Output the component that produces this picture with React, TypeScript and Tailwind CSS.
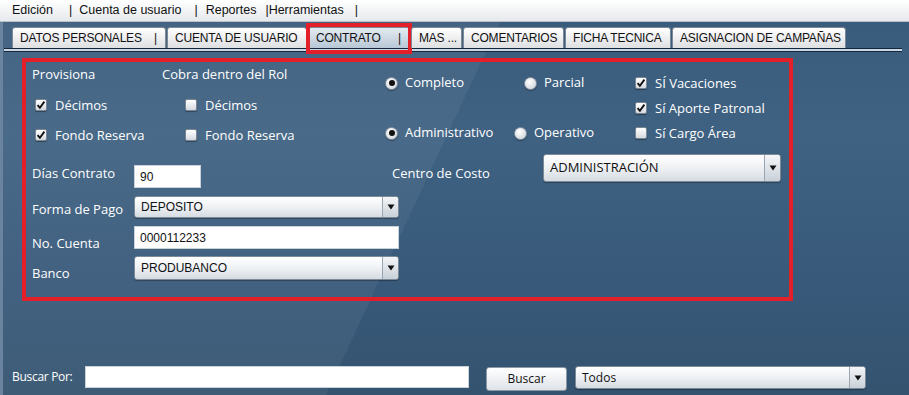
import React from "react";

const comic = { fontFamily: '"Open Sans", "DejaVu Sans", sans-serif' };
const arial = { fontFamily: '"Liberation Sans", Arial, sans-serif' };

function Check({ checked }: { checked?: boolean }) {
  return (
    <span className="w-[12px] h-[12px] shrink-0 border border-[#7b8794] rounded-[2px] bg-[linear-gradient(180deg,#ffffff,#d5dae0)] flex items-center justify-center shadow-[0_1px_1px_rgba(0,0,0,0.35)]">
      {checked && (
        <svg width="10" height="10" viewBox="0 0 10 10">
          <path d="M1.6 5.2 L3.9 7.8 L8.4 1.6" fill="none" stroke="#111" strokeWidth="1.9" />
        </svg>
      )}
    </span>
  );
}

function Radio({ on }: { on?: boolean }) {
  return (
    <span className="w-[13px] h-[13px] shrink-0 rounded-full border border-[#8893a0] bg-[radial-gradient(circle_at_40%_35%,#ffffff,#c9cfd6)] flex items-center justify-center shadow-[0_1px_1px_rgba(0,0,0,0.35)]">
      {on && <span className="w-[6px] h-[6px] rounded-full bg-[#111]" />}
    </span>
  );
}

function CheckItem({ checked, label }: { checked?: boolean; label: string }) {
  return (
    <div className="h-[24px] flex items-center gap-[8px]">
      <Check checked={checked} />
      <span className="text-[13px] text-white leading-none" style={comic}>{label}</span>
    </div>
  );
}

function Arrow() {
  return (
    <span className="w-[16px] self-stretch border-l border-[#9aa6b2] bg-[linear-gradient(180deg,#f4f6f8,#c8d0d8)] rounded-r-[3px] flex items-center justify-center">
      <svg width="8" height="6" viewBox="0 0 8 6">
        <path d="M0.5 0.5 L7.5 0.5 L4 5.5 Z" fill="#111" />
      </svg>
    </span>
  );
}

function Select({ text, w, h, font = arial, size = "text-[12px]" }: { text: string; w: string; h: string; font?: React.CSSProperties; size?: string }) {
  return (
    <div className={`${w} ${h} flex items-stretch rounded-[3px] border border-[#7d8b99] bg-[linear-gradient(180deg,#ffffff_0%,#eef1f4_50%,#d6dce2_100%)] shadow-[0_1px_1px_rgba(0,0,0,0.3)]`}>
      <span className={`flex-1 flex items-center pl-[6px] ${size} text-[#111]`} style={font}>{text}</span>
      <Arrow />
    </div>
  );
}

function Input({ text, w, h }: { text: string; w: string; h: string }) {
  return (
    <div className={`${w} ${h} bg-white border border-[#c9d1d9] flex items-center pl-[5px] text-[12px] text-[#111]`} style={arial}>
      {text}
    </div>
  );
}

function Tab({ label, w, bar, selected }: { label: string; w: string; bar?: boolean; selected?: boolean }) {
  return (
    <div className={`relative ${w} h-[21px] shrink-0`}>
      <div
        className={`h-full flex items-center pl-[7px] pr-[8px] border border-b-0 border-[#7c8896] rounded-t-[3px] text-[12px] tracking-[-0.2px] text-[#111] ${
          selected ? "bg-[linear-gradient(180deg,#e4ebf2,#b8c7d6)]" : "bg-[linear-gradient(180deg,#ffffff,#dedfe1)]"
        }`}
        style={arial}
      >
        <span className="whitespace-nowrap">{label}</span>
        {bar && <span className="ml-auto">|</span>}
      </div>
      {selected && <div className="absolute -left-[2px] -right-[2px] -top-[4px] -bottom-[6px] border-4 border-[#e3202a]" />}
    </div>
  );
}

export default function App() {
  return (
    <div className="w-[909px] h-[395px] flex flex-col overflow-hidden">
      {/* menu bar */}
      <div className="h-[22px] shrink-0 flex items-center pl-[12px] text-[12.5px] text-[#111] bg-[linear-gradient(180deg,#ffffff,#e6e9ed)] border-b border-[#b9c0c8]" style={arial}>
        <span>Edición</span>
        <span className="ml-[16px]">|</span>
        <span className="ml-[7px]">Cuenta de usuario</span>
        <span className="ml-[13px]">|</span>
        <span className="ml-[8px]">Reportes</span>
        <span className="ml-[9px]">|Herramientas</span>
        <span className="ml-[11px]">|</span>
      </div>

      {/* main */}
      <div className="flex-1 flex flex-col border-l-[3px] border-[#6a84a0] bg-[linear-gradient(115deg,rgba(255,255,255,0.05)_0%,rgba(255,255,255,0.05)_46%,rgba(255,255,255,0)_46%,rgba(255,255,255,0)_100%),linear-gradient(180deg,#3a5c7c_0%,#3f6282_30%,#38597a_70%,#34536f_100%)]">
        {/* tabs */}
        <div className="pt-[5px] pl-[9px] flex gap-[1px]">
          <Tab label="DATOS PERSONALES" w="w-[154px]" bar />
          <Tab label="CUENTA DE USUARIO" w="w-[140px]" />
          <Tab label="CONTRATO" w="w-[102px]" bar selected />
          <Tab label="MAS ..." w="w-[51px]" />
          <Tab label="COMENTARIOS" w="w-[101px]" />
          <Tab label="FICHA TECNICA" w="w-[106px]" />
          <Tab label="ASIGNACION DE CAMPAÑAS" w="w-[174px]" />
        </div>
        <div className="ml-[1px] w-[898px] h-[4px] border-y border-[#172638] bg-[#c7d7e8]" />

        {/* red box */}
        <div className="ml-[19px] mt-[6px] w-[771px] h-[243px] border-4 border-[#e3202a] pl-[6px]">
          {/* top section */}
          <div className="h-[92px] flex">
            <div className="w-[130px] pt-[1px] flex flex-col gap-[6px]">
              <div className="h-[24px] flex items-center text-[13px] text-white" style={comic}>Provisiona</div>
              <div className="pl-[3px]"><CheckItem checked label="Décimos" /></div>
              <div className="pl-[3px]"><CheckItem checked label="Fondo Reserva" /></div>
            </div>
            <div className="w-[223px] pt-[1px] flex flex-col gap-[6px]">
              <div className="h-[24px] flex items-center text-[13px] text-white" style={comic}>Cobra dentro del Rol</div>
              <div className="pl-[23px]"><CheckItem label="Décimos" /></div>
              <div className="pl-[23px]"><CheckItem label="Fondo Reserva" /></div>
            </div>
            <div className="w-[250px] pt-[9px] flex flex-col gap-[26px]">
              <div className="h-[24px] flex items-center">
                <div className="w-[139px] flex items-center gap-[7px]">
                  <Radio on />
                  <span className="text-[13px] text-white" style={comic}>Completo</span>
                </div>
                <div className="flex items-center gap-[7px]">
                  <Radio />
                  <span className="text-[13px] text-white" style={comic}>Parcial</span>
                </div>
              </div>
              <div className="h-[24px] flex items-center">
                <div className="w-[129px] flex items-center gap-[7px]">
                  <Radio on />
                  <span className="text-[13px] text-white" style={comic}>Administrativo</span>
                </div>
                <div className="flex items-center gap-[7px]">
                  <Radio />
                  <span className="text-[13px] text-white" style={comic}>Operativo</span>
                </div>
              </div>
            </div>
            <div className="pt-[9px] flex flex-col gap-[1px]">
              <CheckItem checked label="SÍ Vacaciones" />
              <CheckItem checked label="Sí Aporte Patronal" />
              <CheckItem label="Sí Cargo Área" />
            </div>
          </div>

          {/* lower section */}
          <div className="flex">
            <div className="w-[367px] pt-[11px] flex flex-col">
              <div className="flex items-start h-[23px]">
                <span className="w-[102px] text-[13px] leading-[16px] text-white" style={comic}>Días Contrato</span>
                <Input text="90" w="w-[67px]" h="h-[23px]" />
              </div>
              <div className="flex items-start h-[22px] mt-[8px]">
                <span className="w-[102px] mt-[5px] text-[13px] leading-[16px] text-white" style={comic}>Forma de Pago</span>
                <Select text="DEPOSITO" w="w-[265px]" h="h-[22px]" />
              </div>
              <div className="flex items-start h-[23px] mt-[8px]">
                <span className="w-[102px] mt-[9px] text-[13px] leading-[16px] text-white" style={comic}>No. Cuenta</span>
                <Input text="0000112233" w="w-[265px]" h="h-[23px]" />
              </div>
              <div className="flex items-start h-[24px] mt-[7px]">
                <span className="w-[102px] mt-[9px] text-[13px] leading-[16px] text-white" style={comic}>Banco</span>
                <Select text="PRODUBANCO" w="w-[265px]" h="h-[24px]" />
              </div>
            </div>
            <div className="-ml-[7px] flex items-start">
              <span className="w-[151px] mt-[11px] text-[13px] leading-[16px] text-white" style={comic}>Centro de Costo</span>
              <Select text="ADMINISTRACIÓN" w="w-[238px]" h="h-[28px]" font={comic} size="text-[13px]" />
            </div>
          </div>
        </div>

        {/* search bar */}
        <div className="mt-[65px] pl-[9px] flex items-start">
          <span className="w-[73px] mt-[3px] text-[12px] leading-[16px] text-white tracking-[-0.3px]" style={comic}>Buscar Por:</span>
          <Input text="" w="w-[384px]" h="h-[22px]" />
          <div className="ml-[17px] mt-[1px] w-[81px] h-[24px] rounded-[3px] border border-[#8c99a6] bg-[linear-gradient(180deg,#ffffff,#dfe3e8)] flex items-center justify-center text-[12px] text-[#111]" style={comic}>
            Buscar
          </div>
          <div className="ml-[8px]">
            <Select text="Todos" w="w-[291px]" h="h-[23px]" font={comic} size="text-[12px]" />
          </div>
        </div>
      </div>
    </div>
  );
}
